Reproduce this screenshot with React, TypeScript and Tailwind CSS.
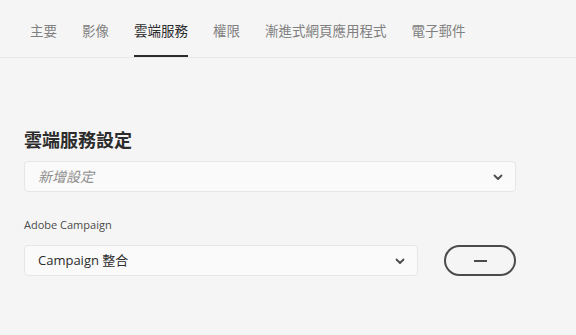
import React from 'react';

const TABS = ['主要', '影像', '雲端服務', '權限', '漸進式網頁應用程式', '電子郵件'];

const Chevron: React.FC = () => (
  <svg className="h-[10px] w-[10px] text-[#4b4b4b]" viewBox="0 0 10 10" fill="none" stroke="currentColor">
    <path d="M1.5 3.5 5 7l3.5-3.5" strokeWidth={1.8} strokeLinecap="round" strokeLinejoin="round" />
  </svg>
);

const App: React.FC = () => {
  const active = '雲端服務';

  return (
    <div
      className="min-h-[335px] w-[576px] bg-[#f5f5f5] text-[#2c2c2c]"
      style={{ fontFamily: '"Open Sans", "Noto Sans CJK TC", sans-serif' }}
    >
      {/* Tabs */}
      <div className="flex h-[58px] gap-[25px] border-b border-[#e8e8e8] pl-[30px]">
        {TABS.map((tab) => (
          <div
            key={tab}
            className={`flex h-full items-center border-b-2 pt-[8px] text-[13.5px] ${
              tab === active ? 'border-[#2c2c2c] text-[#2c2c2c]' : 'border-transparent text-[#808080]'
            }`}
          >
            {tab}
          </div>
        ))}
      </div>

      <div className="px-[24px] pt-[69px]">
        <h2 className="text-[18px] font-bold leading-[26px] text-[#2c2c2c]">雲端服務設定</h2>

        <div className="mt-[8px] flex h-[31px] w-[492px] items-center justify-between rounded-[4px] border border-[#e6e6e6] bg-[#fafafa] pl-[13px] pr-[12px]">
          <span className="text-[14px] italic text-[#8e8e8e]">新增設定</span>
          <Chevron />
        </div>

        <div className="mt-[25px] text-[11px] leading-[16px] text-[#4b4b4b]">Adobe Campaign</div>

        <div className="mt-[12px] flex items-center gap-[26px]">
          <div className="flex h-[31px] w-[394px] items-center justify-between rounded-[4px] border border-[#e6e6e6] bg-[#fafafa] pl-[13px] pr-[12px]">
            <span className="text-[13px] text-[#2c2c2c]">Campaign 整合</span>
            <Chevron />
          </div>
          <button className="flex h-[31px] w-[72px] items-center justify-center rounded-full border-2 border-[#4b4b4b] bg-transparent">
            <span className="h-[2px] w-[13px] bg-[#4b4b4b]" />
          </button>
        </div>
      </div>
    </div>
  );
};

export default App;
